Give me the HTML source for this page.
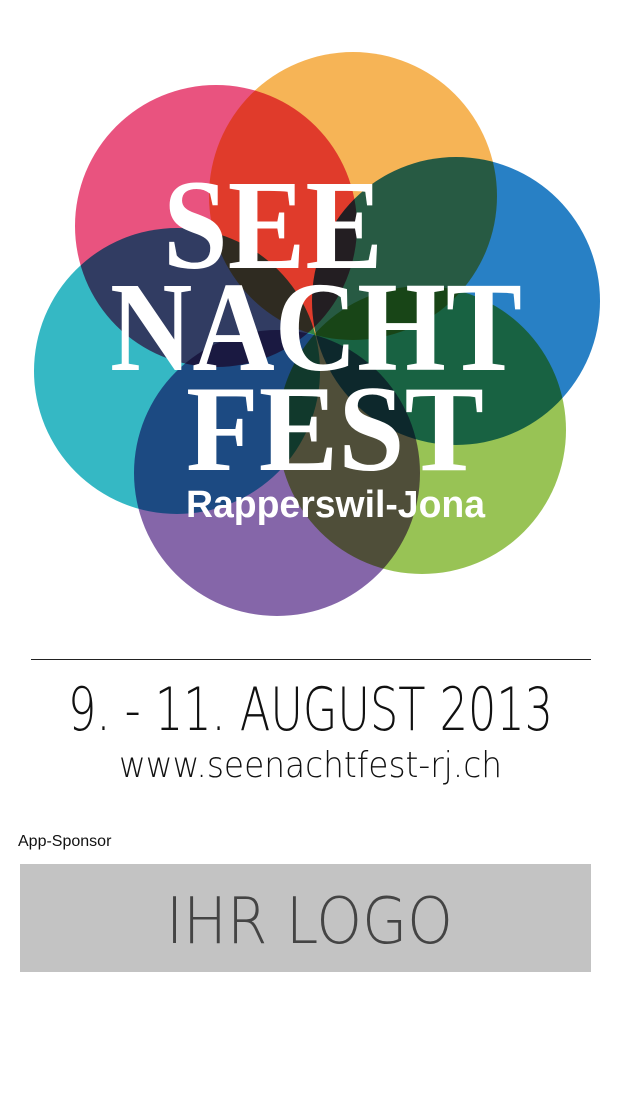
<!DOCTYPE html>
<html><head><meta charset="utf-8"><style>
html,body{margin:0;padding:0;background:#fff;width:621px;height:1101px;overflow:hidden}
svg{display:block}
.thin{font-family:"DejaVu Sans ExtraLight","DejaVu Sans","Liberation Sans",sans-serif;font-weight:200}
</style></head><body>
<svg width="621" height="1101" viewBox="0 0 621 1101" xmlns="http://www.w3.org/2000/svg">
<rect width="621" height="1101" fill="#fff"/>
<g style="isolation:isolate">
<circle cx="216" cy="226" r="141" fill="#e9537f" style="mix-blend-mode:multiply"/>
<circle cx="353" cy="196" r="144" fill="#f6b456" style="mix-blend-mode:multiply"/>
<circle cx="456" cy="301" r="144" fill="#2880c5" style="mix-blend-mode:multiply"/>
<circle cx="422" cy="430" r="144" fill="#98c355" style="mix-blend-mode:multiply"/>
<circle cx="277" cy="473" r="143" fill="#8566a9" style="mix-blend-mode:multiply"/>
<circle cx="177" cy="371" r="143" fill="#35b8c4" style="mix-blend-mode:multiply"/>
</g>
<g fill="#fff" font-family="Liberation Serif, serif" font-weight="bold">
<text x="163" y="268" font-size="128" textLength="220" lengthAdjust="spacingAndGlyphs">SEE</text>
<text x="110" y="370" font-size="128" textLength="412" lengthAdjust="spacingAndGlyphs">NACHT</text>
<text x="186" y="470" font-size="123" textLength="298" lengthAdjust="spacingAndGlyphs">FEST</text>
</g>
<text x="186" y="517" fill="#fff" font-family="Liberation Sans, sans-serif" font-weight="bold" font-size="38" textLength="299" lengthAdjust="spacingAndGlyphs">Rapperswil-Jona</text>
<rect x="31" y="659" width="560" height="1" fill="#222"/>
<text class="thin" x="68" y="730" fill="#111" font-size="60" textLength="485" lengthAdjust="spacingAndGlyphs">9. - 11. AUGUST 2013</text>
<text class="thin" x="119" y="777" fill="#111" font-size="36" textLength="383" lengthAdjust="spacingAndGlyphs">www.seenachtfest-rj.ch</text>
<text x="18" y="846" fill="#111" font-family="Liberation Sans, sans-serif" font-size="16">App-Sponsor</text>
<rect x="20" y="864" width="571" height="108" fill="#c3c3c3"/>
<text class="thin" x="166" y="943" fill="#444" font-size="64" textLength="287" lengthAdjust="spacingAndGlyphs">IHR LOGO</text>
</svg>
</body></html>
